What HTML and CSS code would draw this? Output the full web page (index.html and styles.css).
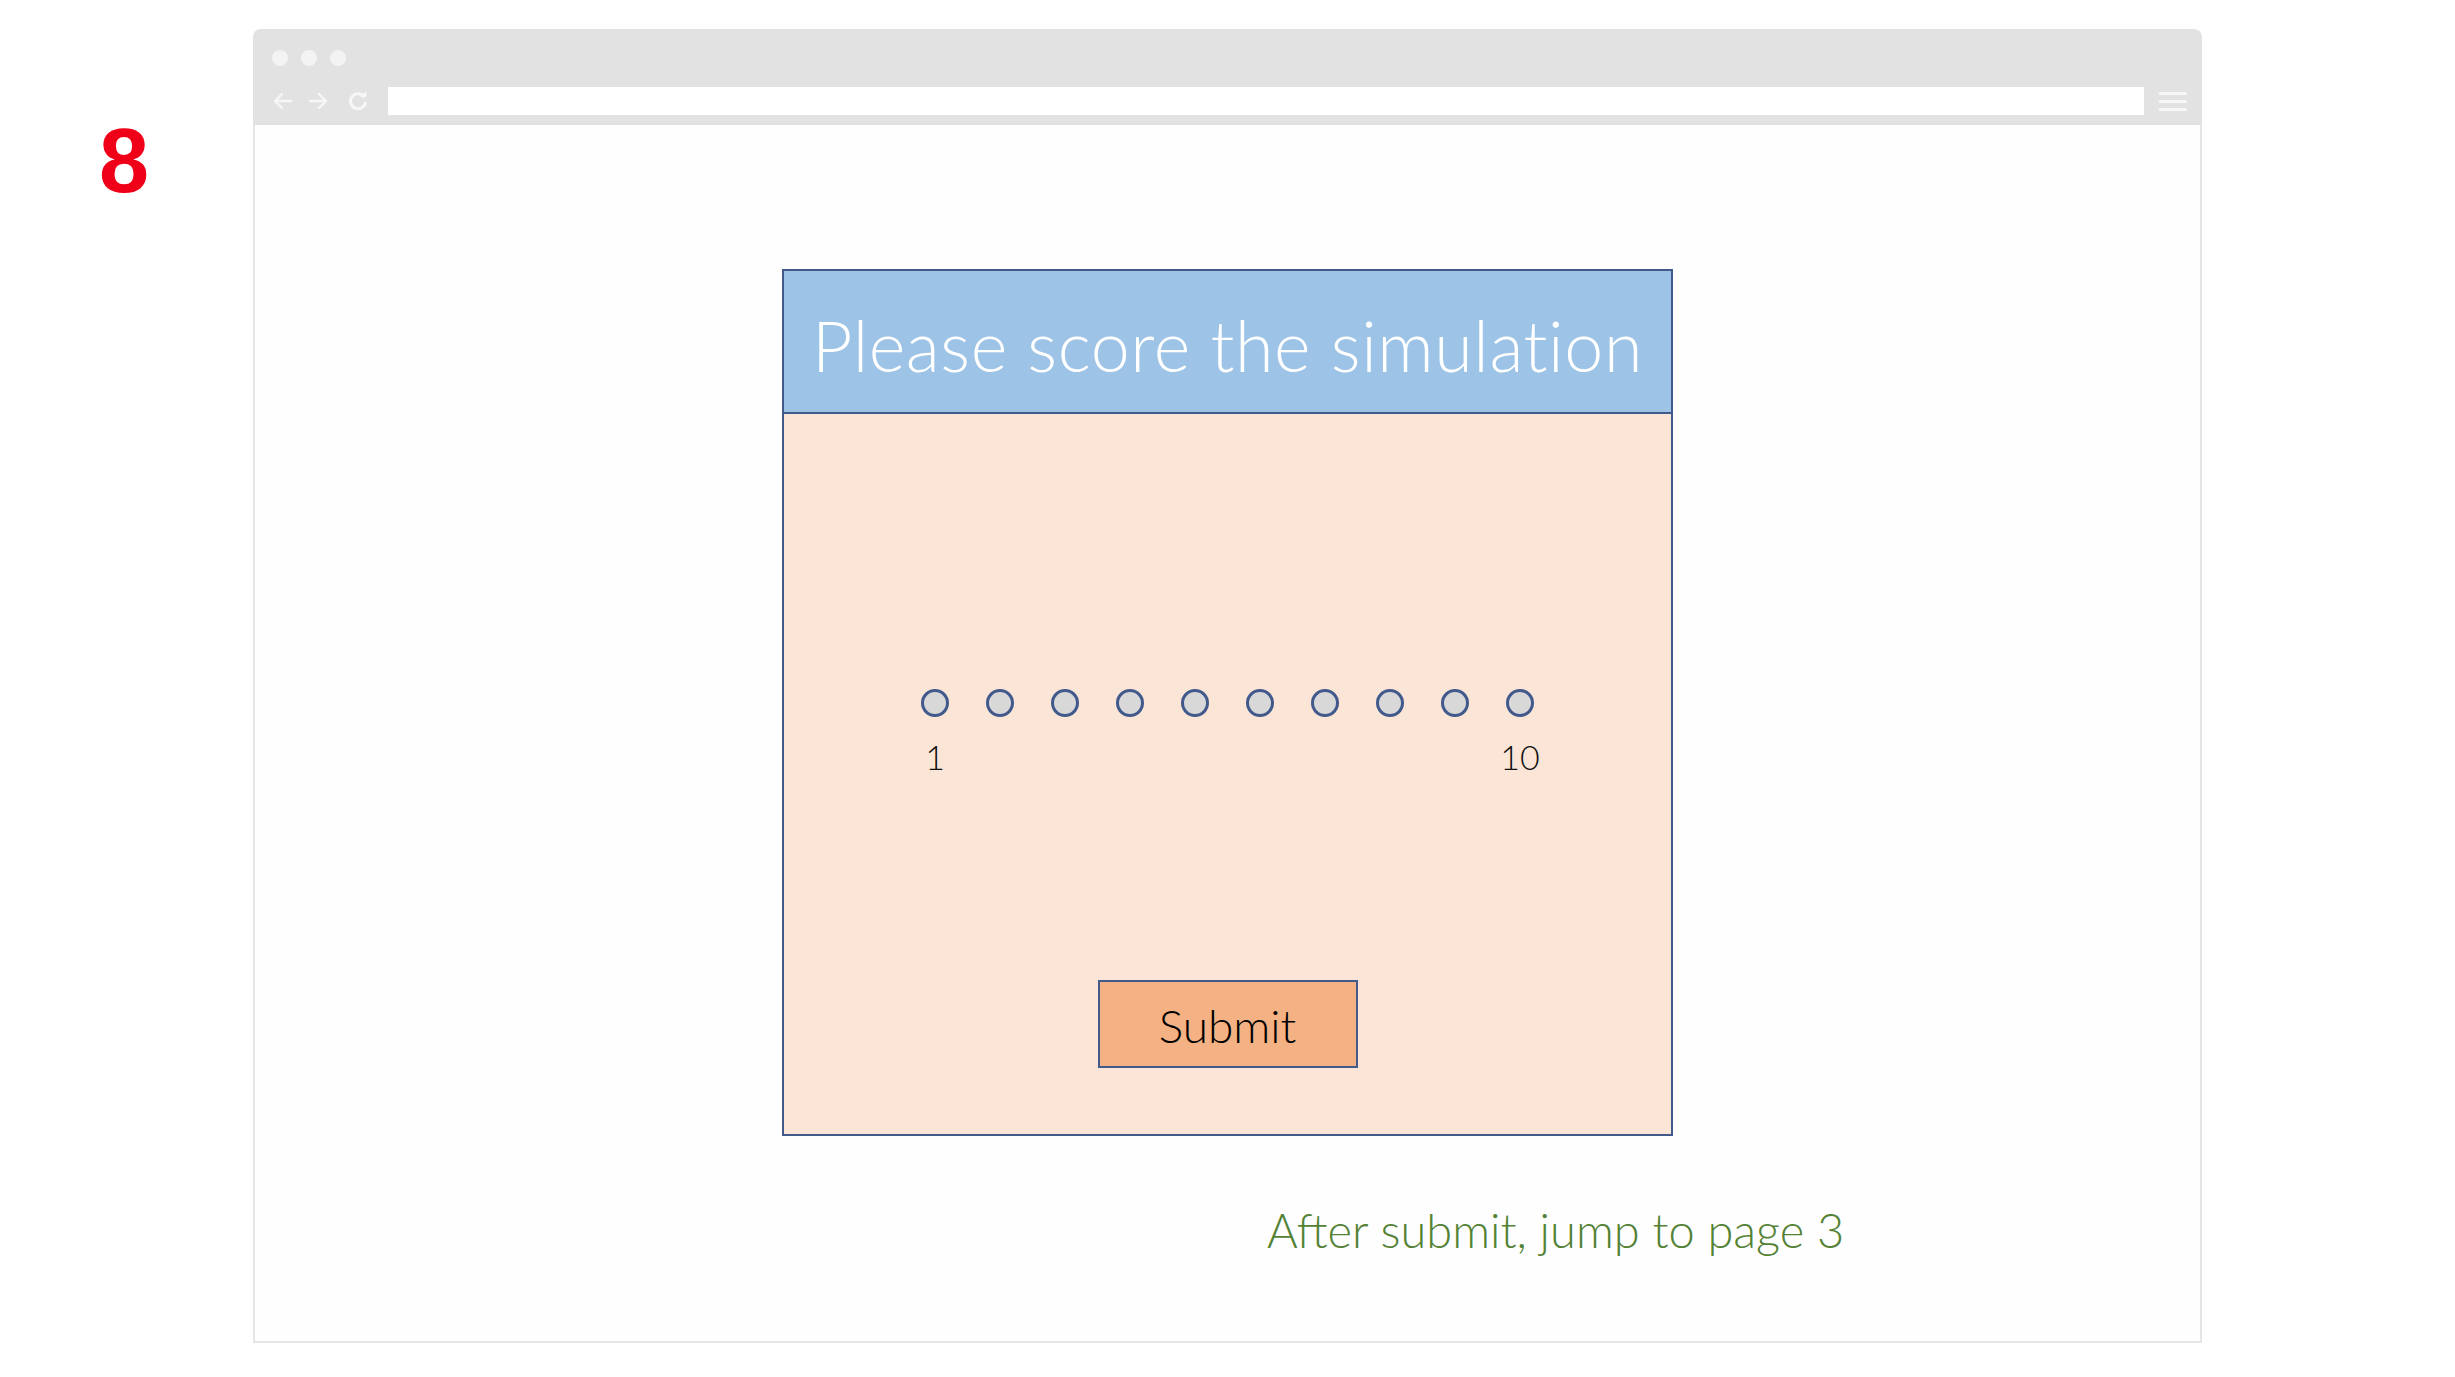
FILE: index.html
```html
<!DOCTYPE html>
<html>
<head>
<meta charset="utf-8">
<link rel="stylesheet" href="styles.css">
</head>
<body>
<div class="slide">
  <div class="label">8</div>
  <div class="browser">
    <div class="chrome">
      <div class="dots"><span class="dot"></span><span class="dot"></span><span class="dot"></span></div>
      <div class="navrow">
        <svg class="nav" width="22" height="22" viewBox="0 0 22 22"><path d="M19 11H4M10 4l-7 7 7 7" fill="none" stroke="#f7f7f7" stroke-width="2.4" stroke-linecap="round" stroke-linejoin="round"/></svg>
        <svg class="nav" width="22" height="22" viewBox="0 0 22 22"><path d="M3 11h15M12 4l7 7-7 7" fill="none" stroke="#f7f7f7" stroke-width="2.4" stroke-linecap="round" stroke-linejoin="round"/></svg>
        <svg class="nav reload" width="22" height="22" viewBox="0 0 22 22"><path d="M17.5 7.5A7.5 7.5 0 1 0 18.5 12" fill="none" stroke="#f7f7f7" stroke-width="3"/><path d="M13 6.5h6.5V1z" fill="#f7f7f7"/></svg>
        <div class="address"></div>
        <div class="menu"><span></span><span></span><span></span></div>
      </div>
    </div>
    <div class="content">
      <div class="card">
        <div class="card-head">Please score the simulation</div>
        <div class="card-body">
          <div class="scale">
            <div class="opt"><span class="radio"></span><span class="num">1</span></div>
            <div class="opt"><span class="radio"></span><span class="num"></span></div>
            <div class="opt"><span class="radio"></span><span class="num"></span></div>
            <div class="opt"><span class="radio"></span><span class="num"></span></div>
            <div class="opt"><span class="radio"></span><span class="num"></span></div>
            <div class="opt"><span class="radio"></span><span class="num"></span></div>
            <div class="opt"><span class="radio"></span><span class="num"></span></div>
            <div class="opt"><span class="radio"></span><span class="num"></span></div>
            <div class="opt"><span class="radio"></span><span class="num"></span></div>
            <div class="opt"><span class="radio"></span><span class="num">10</span></div>
          </div>
          <div class="submit">Submit</div>
        </div>
      </div>
      <div class="note">After submit, jump to page 3</div>
    </div>
  </div>
</div>
</body>
</html>
```

FILE: styles.css
```css
html, body {
  margin: 0;
  padding: 0;
  background: #ffffff;
}
body {
  width: 2455px;
  height: 1377px;
  overflow: hidden;
  font-family: Lato, "Liberation Sans", sans-serif;
}
.slide {
  display: flex;
  padding: 29px 0 0 99px;
}
.label {
  width: 154px;
  font-family: "Liberation Sans", Arial, sans-serif;
  font-weight: bold;
  font-size: 90px;
  line-height: 1;
  color: #f00018;
  margin-top: 87px;
}
.browser {
  width: 1949px;
  height: 1314px;
  display: flex;
  flex-direction: column;
}
.chrome {
  height: 96px;
  background: #e2e2e2;
  border-radius: 8px 8px 0 0;
  display: flex;
  flex-direction: column;
  box-sizing: border-box;
  padding: 21px 0 0 19px;
}
.dots {
  display: flex;
  gap: 13px;
  height: 16px;
}
.dot {
  width: 16px;
  height: 16px;
  border-radius: 50%;
  background: #f3f3f3;
}
.navrow {
  display: flex;
  align-items: center;
  margin-top: 21px;
  height: 28px;
}
.nav {
  margin-right: 13px;
}
.nav.reload {
  margin-left: 5px;
  margin-right: 19px;
}
.address {
  width: 1756px;
  height: 28px;
  background: #ffffff;
}
.menu {
  margin-left: 15px;
  display: flex;
  flex-direction: column;
  gap: 5px;
}
.menu span {
  width: 28px;
  height: 3px;
  background: #f7f7f7;
  border-radius: 1px;
}
.content {
  flex: 1;
  background: #fefefe;
  border: 2px solid #e6e6e6;
  border-top: none;
  display: flex;
  flex-direction: column;
  align-items: center;
  padding-top: 144px;
}
.card {
  width: 891px;
  box-sizing: border-box;
  border: 2px solid #41598b;
  background: #fbe5d6;
}
.card-head {
  height: 143px;
  box-sizing: border-box;
  background: #9dc3e6;
  border-bottom: 2px solid #41598b;
  color: #ffffff;
  font-weight: 300;
  font-size: 70px;
  letter-spacing: 0.6px;
  display: flex;
  align-items: center;
  justify-content: center;
  padding-top: 6px;
  white-space: nowrap;
}
.card-body {
  height: 720px;
  display: flex;
  flex-direction: column;
  align-items: center;
  padding-top: 275px;
  box-sizing: border-box;
}
.scale {
  display: flex;
  gap: 0;
}
.opt {
  width: 65px;
  display: flex;
  flex-direction: column;
  align-items: center;
}
.radio {
  width: 28px;
  height: 28px;
  box-sizing: border-box;
  border: 3px solid #41598b;
  border-radius: 50%;
  background: #d8d8d8;
}
.num {
  font-size: 34px;
  font-weight: 300;
  line-height: 40px;
  height: 40px;
  margin-top: 20px;
  color: #111111;
}
.submit {
  margin-top: 203px;
  width: 260px;
  height: 88px;
  box-sizing: border-box;
  border: 2px solid #41598b;
  background: #f4b183;
  display: flex;
  align-items: center;
  justify-content: center;
  font-size: 46px;
  font-weight: 300;
  color: #000000;
  padding-top: 2px;
}
.note {
  align-self: flex-start;
  margin-left: 1012px;
  margin-top: 66px;
  font-size: 47px;
  font-weight: 300;
  color: #548235;
}
```
